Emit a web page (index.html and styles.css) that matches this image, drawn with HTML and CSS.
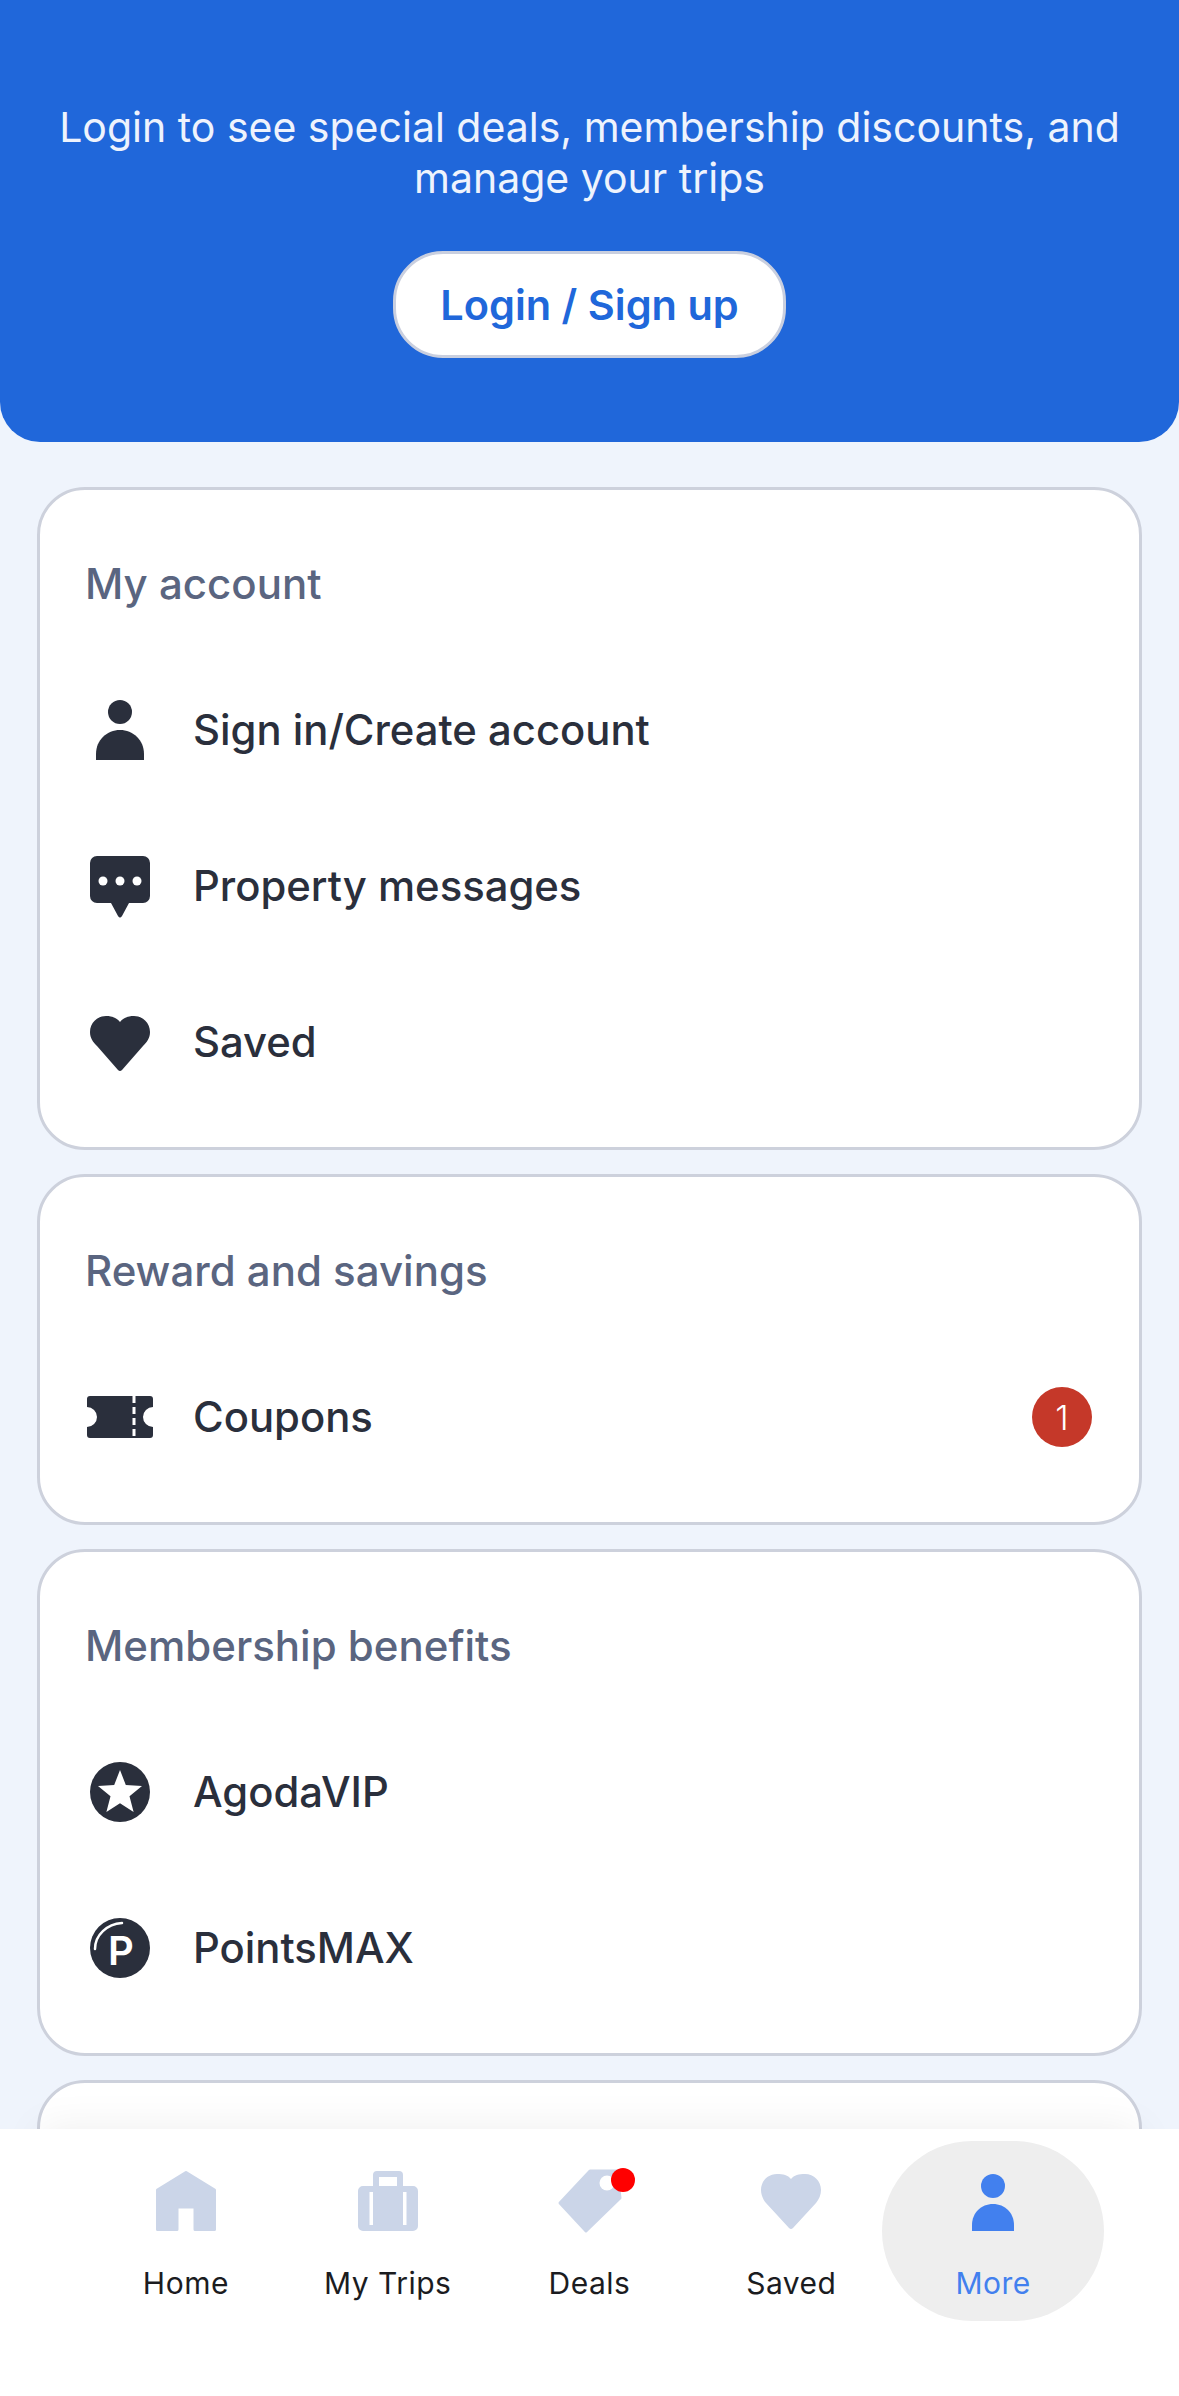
FILE: index.html
```html
<!DOCTYPE html>
<html lang="en">

<head>
  <meta charset="UTF-8">
  <meta name="viewport" content="width=device-width, initial-scale=1.0">
  <title>More</title>
  <link rel="stylesheet" href="styles.css">
</head>

<body>
  <main class="scroller">
    <header class="hero">
      <p class="hero-text">Login to see special deals, membership discounts, and manage your trips</p>
      <a class="login-btn" href="#">Login / Sign up</a>
    </header>

    <section class="card">
      <h2 class="card-title">My account</h2>
      <a class="row" href="#">
        <svg class="row-icon" viewBox="0 0 60 60">
          <circle cx="30" cy="12" r="12" />
          <path d="M6 60V54C6 40 17 30 30 30C43 30 54 40 54 54V60Z" />
        </svg>
        <span class="row-label">Sign in/Create account</span>
      </a>
      <a class="row" href="#">
        <svg class="row-icon" viewBox="0 0 60 60">
          <path d="M7 0H53A7 7 0 0 1 60 7V40A7 7 0 0 1 53 47H39L32 60Q30 63 28 60L21 47H7A7 7 0 0 1 0 40V7A7 7 0 0 1 7 0Z" />
          <circle class="cut" cx="13" cy="25" r="4.5" />
          <circle class="cut" cx="30" cy="25" r="4.5" />
          <circle class="cut" cx="47" cy="25" r="4.5" />
        </svg>
        <span class="row-label">Property messages</span>
      </a>
      <a class="row" href="#">
        <svg class="row-icon" viewBox="0 0 60 60">
          <path d="M30 10C26 5 21 4 16 4C7 4 0 11 0 20C0 26 3 30 7 34L28 58Q30 60 32 58L53 34C57 30 60 26 60 20C60 11 53 4 44 4C39 4 34 5 30 10Z" />
        </svg>
        <span class="row-label">Saved</span>
      </a>
    </section>

    <section class="card">
      <h2 class="card-title">Reward and savings</h2>
      <a class="row" href="#">
        <svg class="row-icon" viewBox="0 0 60 60">
          <path d="M0 9H60A3 3 0 0 1 63 12V20A10 10 0 0 0 63 40V48A3 3 0 0 1 60 51H0A3 3 0 0 1 -3 48V40A10 10 0 0 0 -3 20V12A3 3 0 0 1 0 9Z" />
          <line class="perf" x1="44" y1="9" x2="44" y2="51" />
        </svg>
        <span class="row-label">Coupons</span>
        <span class="badge">1</span>
      </a>
    </section>

    <section class="card">
      <h2 class="card-title">Membership benefits</h2>
      <a class="row" href="#">
        <svg class="row-icon" viewBox="0 0 60 60">
          <circle cx="30" cy="30" r="30" />
          <path class="cut" d="M30 8L35.8 23L52 24L39.5 34.2L43.6 50L30 41.2L16.4 50L20.5 34.2L8 24L24.2 23Z" />
        </svg>
        <span class="row-label">AgodaVIP</span>
      </a>
      <a class="row" href="#">
        <svg class="row-icon" viewBox="0 0 60 60">
          <circle cx="30" cy="30" r="30" />
          <path class="arc" d="M5 31C5 17 17 6 32 5" />
          <text class="points-p" x="31" y="47" text-anchor="middle">P</text>
        </svg>
        <span class="row-label">PointsMAX</span>
      </a>
    </section>

    <section class="card card-cut"></section>
  </main>

  <nav class="tabbar">
    <a class="tab" href="#">
      <svg class="tab-icon" viewBox="0 0 60 60">
        <path class="round" d="M30 1.5L58.5 19V58.5H39V36H21V58.5H1.5V19Z" />
      </svg>
      <span class="tab-label">Home</span>
    </a>
    <a class="tab" href="#">
      <svg class="tab-icon" viewBox="0 0 60 60">
        <path d="M19 0H41A4 4 0 0 1 45 4V15H55A5 5 0 0 1 60 20V55A5 5 0 0 1 55 60H5A5 5 0 0 1 0 55V20A5 5 0 0 1 5 15H15V4A4 4 0 0 1 19 0ZM21 6V15H39V6Z" fill-rule="evenodd" />
        <rect class="cut" x="11.5" y="21" width="3.5" height="33" />
        <rect class="cut" x="45" y="21" width="3.5" height="33" />
      </svg>
      <span class="tab-label">My Trips</span>
    </a>
    <a class="tab" href="#">
      <svg class="tab-icon" viewBox="0 0 60 60">
        <path class="round" d="M27 60L1 32L31 0H58L61 27Z" />
        <circle class="cut" cx="48" cy="12" r="7.5" />
        <circle class="dot" cx="64" cy="9" r="12" />
      </svg>
      <span class="tab-label">Deals</span>
    </a>
    <a class="tab" href="#">
      <svg class="tab-icon" viewBox="0 0 60 60">
        <path d="M30 8C27 4 22 3 16 3C7 3 0 10 0 19C0 24 2 28 5 32L28 57Q30 59 32 57L55 32C58 28 60 24 60 19C60 10 53 3 44 3C38 3 33 4 30 8Z" />
      </svg>
      <span class="tab-label">Saved</span>
    </a>
    <a class="tab active" href="#">
      <svg class="tab-icon" viewBox="0 0 60 60">
        <ellipse cx="30" cy="15" rx="12" ry="12" />
        <path d="M9 60V54C9 42 18 33 30 33C42 33 51 42 51 54V60Z" />
      </svg>
      <span class="tab-label">More</span>
    </a>
  </nav>
</body>

</html>
```

FILE: styles.css
```css
* {
  box-sizing: border-box;
}

body {
  margin: 0;
  height: 100vh;
  display: flex;
  flex-direction: column;
  overflow: hidden;
  background-color: #eff4fc;
  font-family: Inter, 'Noto Sans', sans-serif;
  color: #2a2f3c;
}

a {
  color: inherit;
  text-decoration: none;
}

.scroller {
  flex: 1;
  min-height: 0;
  overflow: hidden;
  padding-bottom: 20px;
}

/* blue login header */
.hero {
  height: 442px;
  padding: 102px 40px 0;
  display: flex;
  flex-direction: column;
  align-items: center;
  background-color: #2067da;
  border-radius: 0 0 40px 40px;
}

.hero-text {
  margin: 0;
  width: 1100px;
  font-size: 41px;
  line-height: 51px;
  text-align: center;
  color: #eef3fd;
}

.login-btn {
  margin-top: 47px;
  width: 393px;
  height: 107px;
  display: flex;
  align-items: center;
  justify-content: center;
  background-color: #fff;
  border: 3px solid #c9cfdf;
  border-radius: 50px;
  font-size: 41.5px;
  font-weight: 600;
  color: #2067da;
}

/* list cards */
.card {
  margin: 24px 37px 0;
  padding: 0 0 27px;
  background-color: #fff;
  border: 3px solid #cdd1dc;
  border-radius: 48px;
}

.hero + .card {
  margin-top: 45px;
}

.card-cut {
  height: 200px;
}

.card-title {
  margin: 0;
  height: 162px;
  padding: 24px 0 0 45px;
  display: flex;
  align-items: center;
  font-size: 42px;
  font-weight: 500;
  color: #5a6580;
}

.row {
  height: 156px;
  padding: 0 47px 0 50px;
  display: flex;
  align-items: center;
}

.row-icon {
  width: 60px;
  height: 60px;
  flex-shrink: 0;
  overflow: visible;
  fill: #2a2f3c;
}

.row-label {
  margin-left: 43px;
  flex: 1;
  font-size: 41.8px;
  font-weight: 550;
}

.badge {
  width: 60px;
  height: 60px;
  display: flex;
  align-items: center;
  justify-content: center;
  border-radius: 50%;
  background-color: #c53829;
  color: #fff;
  font-size: 34px;
  font-weight: 300;
}

.cut {
  fill: #fff;
}

.round {
  stroke: currentColor;
  stroke-width: 3;
  stroke-linejoin: round;
}

.perf {
  stroke: #fff;
  stroke-width: 3;
  stroke-dasharray: 7 4;
}

.arc {
  fill: none;
  stroke: #fff;
  stroke-width: 2.5;
  stroke-linecap: round;
}

.points-p {
  fill: #fff;
  font-family: Inter, sans-serif;
  font-size: 40px;
  font-weight: 600;
}

/* bottom tabs */
.tabbar {
  position: relative;
  flex-shrink: 0;
  height: 267px;
  padding: 12px 85px 0;
  display: grid;
  grid-template-columns: repeat(5, 1fr);
  align-items: start;
  background-color: #fff;
  box-shadow: 0 -40px 40px -40px rgba(0, 0, 0, 0.07);
}

.tab {
  height: 180px;
  padding-top: 30px;
  display: flex;
  flex-direction: column;
  align-items: center;
  color: #1b1c1f;
}

.tab-icon {
  width: 60px;
  height: 60px;
  overflow: visible;
  fill: #cbd5e8;
  color: #cbd5e8;
}

.tab-label {
  margin-top: 34px;
  font-size: 30px;
  line-height: 36px;
  letter-spacing: 0.5px;
}

.tab.active {
  margin: 0 -10px;
  background-color: #eeeeee;
  border-radius: 90px;
  color: #4280ee;
}

.tab.active .tab-icon {
  fill: #4280ee;
}

.dot {
  fill: #ff0000;
}
```
